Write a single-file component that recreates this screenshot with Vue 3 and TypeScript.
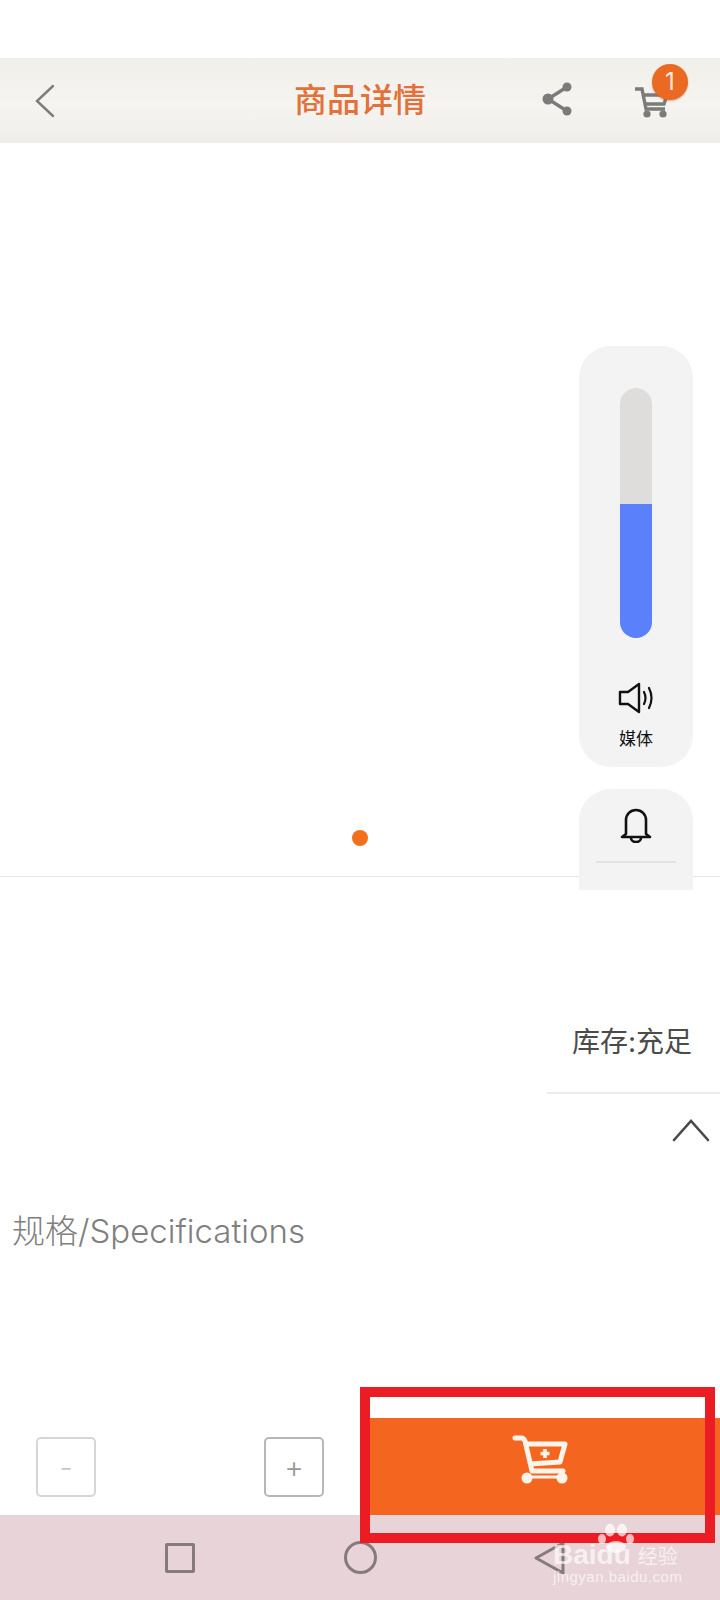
<template>
  <div class="page">
    <header class="top-bar">
      <button class="back-btn" aria-label="back">
        <svg width="22" height="34" viewBox="0 0 22 34" fill="none">
          <path d="M19 2 L3 17 L19 32" stroke="#7d7d7b" stroke-width="2.4" stroke-linecap="round" />
        </svg>
      </button>
      <div class="top-title">商品详情</div>
      <div class="top-actions">
        <svg class="share-icon" width="32" height="36" viewBox="0 0 32 36" fill="none">
          <path d="M26 6 L7 18 L26 30" stroke="#7b7b7b" stroke-width="3.4" />
          <circle cx="26" cy="6" r="4.5" fill="#7b7b7b" />
          <circle cx="7" cy="18" r="5.5" fill="#7b7b7b" />
          <circle cx="26" cy="30" r="4.5" fill="#7b7b7b" />
        </svg>
        <div class="cart-wrap">
          <svg width="36" height="36" viewBox="0 0 36 36" fill="none">
            <path d="M1 5 H8 L12 25 H31" stroke="#7b7b7b" stroke-width="3.4" />
            <path d="M9 11 H33 L30 20 H11" stroke="#7b7b7b" stroke-width="3.4" />
            <circle cx="13" cy="30" r="3.6" fill="#7b7b7b" />
            <circle cx="29" cy="30" r="3.6" fill="#7b7b7b" />
          </svg>
          <span class="cart-badge">1</span>
        </div>
      </div>
    </header>

    <section class="hero">
      <span class="hero-dot"></span>
    </section>

    <section class="stock-section">
      <div class="stock-label">库存:充足</div>
      <div class="fold-row">
        <svg width="38" height="24" viewBox="0 0 38 24" fill="none">
          <path d="M2 22 L19 3 L36 22" stroke="#4a4a4a" stroke-width="2.6" stroke-linecap="round" />
        </svg>
      </div>
      <div class="spec-label">规格/Specifications</div>
    </section>

    <section class="buy-bar">
      <div class="qty">
        <button class="qty-btn minus">-</button>
        <button class="qty-btn plus">+</button>
      </div>
      <button class="add-btn" aria-label="add to cart">
        <svg width="56" height="50" viewBox="0 0 56 50" fill="none">
          <path d="M3 3 H9 Q12 3 13 6 L20 36 H51" stroke="#fff4ea" stroke-width="5" stroke-linecap="round" stroke-linejoin="round" />
          <path d="M13 9 H53 L48 27 L18 29" stroke="#fff4ea" stroke-width="5" stroke-linejoin="round" />
          <path d="M33 14 V23 M28.500 18.500 H37.500" stroke="#fff4ea" stroke-width="3.600" />
          <circle cx="15" cy="43" r="5.500" fill="#fff4ea" />
          <circle cx="50" cy="43" r="5.500" fill="#fff4ea" />
          <path d="M15 42 H50" stroke="#fff4ea" stroke-width="3" />
        </svg>
      </button>
    </section>

    <nav class="sys-nav">
      <span class="sys-square"></span>
      <span class="sys-circle"></span>
      <svg class="sys-back" width="32" height="34" viewBox="0 0 32 34" fill="none">
        <path d="M30 2 L3 17 L30 32 Z" stroke="#857a7e" stroke-width="3" stroke-linejoin="round" />
      </svg>
    </nav>

    <aside class="volume-panel">
      <div class="volume-track">
        <div class="volume-fill" :style="{ height: volume + '%' }"></div>
      </div>
      <svg class="speaker" width="36" height="32" viewBox="0 0 36 32" fill="none">
        <path d="M2 10 H10 L21 2 V30 L10 22 H2 Z" stroke="#111" stroke-width="2.4" stroke-linejoin="round" />
        <path d="M26 10 Q29 16 26 22 M31 6 Q36 16 31 26" stroke="#111" stroke-width="2.2" stroke-linecap="round" />
      </svg>
      <div class="volume-name">媒体</div>
    </aside>

    <aside class="ring-panel">
      <svg width="32" height="36" viewBox="0 0 32 36" fill="none">
        <path d="M6 27 V13 A10 10 0 0 1 26 13 V27 L30 30 H2 Z" stroke="#111" stroke-width="2.6" stroke-linejoin="round" />
        <path d="M11 31 A5 4 0 0 0 21 31" stroke="#111" stroke-width="2.6" />
      </svg>
      <div class="ring-line"></div>
    </aside>

    <div class="mark-box"></div>

    <div class="watermark">
      <svg class="paw" width="38" height="30" viewBox="0 0 38 30">
        <ellipse cx="13" cy="7" rx="5" ry="6.500" />
        <ellipse cx="25" cy="7" rx="5" ry="6.500" />
        <ellipse cx="5" cy="16" rx="4" ry="5" />
        <ellipse cx="33" cy="16" rx="4" ry="5" />
        <ellipse cx="19" cy="24" rx="10" ry="6" />
      </svg>
      <div class="wm-main">Baidu<span class="wm-cn">经验</span></div>
      <div class="wm-url">jingyan.baidu.com</div>
    </div>
  </div>
</template>

<script setup lang="ts">
import { ref } from 'vue'

// share of the slider that is filled
const volume = ref<number>(53.5)
</script>

<style>
html,
body {
  margin: 0;
  background: #fff;
}
</style>

<style scoped>
* {
  box-sizing: border-box;
}

.page {
  position: relative;
  width: 720px;
  height: 1600px;
  overflow: hidden;
  display: flex;
  flex-direction: column;
  padding-top: 58px;
  background: #fff;
  font-family: "Inter", "Noto Sans CJK SC", sans-serif;
}

button {
  padding: 0;
  border: 0;
  background: none;
  font-family: inherit;
}

.top-bar {
  height: 85px;
  display: grid;
  grid-template-columns: 1fr auto 1fr;
  align-items: center;
  padding: 0 34px;
  background: linear-gradient(180deg, #f1efea 0%, #f5f4f0 55%, #efeeea 100%);
}

.back-btn {
  display: flex;
  justify-self: start;
}

.top-title {
  font-size: 33px;
  font-weight: 500;
  color: #e2713a;
  line-height: 1;
}

.top-actions {
  display: flex;
  justify-self: end;
  align-items: center;
  gap: 61px;
  padding-right: 16px;
}

.share-icon {
  margin-top: -3px;
}

.cart-wrap {
  position: relative;
  display: flex;
  margin-top: 3px;
}

.cart-badge {
  position: absolute;
  top: -20px;
  right: -18px;
  width: 36px;
  height: 36px;
  border-radius: 50%;
  background: #ea6a24;
  color: #fbe9dc;
  font-size: 24px;
  line-height: 36px;
  text-align: center;
  box-shadow: 0 1px 2px rgba(150, 80, 30, 0.4);
}

.hero {
  height: 734px;
  display: flex;
  justify-content: center;
  align-items: flex-end;
  padding-bottom: 30px;
  border-bottom: 1px solid #e6e6e6;
}

.hero-dot {
  width: 16px;
  height: 16px;
  border-radius: 50%;
  background: #f2701c;
}

.stock-section {
  flex: 1;
  display: flex;
  flex-direction: column;
}

.stock-label {
  align-self: flex-end;
  width: 173px;
  height: 217px;
  padding: 143px 28px 0 0;
  border-bottom: 2px solid #ececec;
  font-size: 28px;
  line-height: 44px;
  text-align: right;
  color: #4b4b4b;
  white-space: nowrap;
}

.fold-row {
  display: flex;
  justify-content: flex-end;
  padding: 24px 10px 0 0;
}

.spec-label {
  padding: 67px 0 0 12px;
  font-size: 33px;
  line-height: 44px;
  font-weight: 300;
  color: #7f7f7f;
}

.buy-bar {
  height: 97px;
  display: flex;
  background: #fff;
}

.qty {
  width: 360px;
  display: flex;
  justify-content: space-between;
  align-items: center;
  padding: 0 36px;
}

.qty-btn {
  width: 60px;
  height: 60px;
  border: 2px solid #b9b6b6;
  border-radius: 5px;
  font-size: 30px;
  font-weight: 300;
  color: #999;
  line-height: 1;
}

.qty-btn.minus {
  border-color: #d6d6d6;
  color: #c8c8c8;
}

.add-btn {
  flex: 1;
  display: flex;
  align-items: center;
  justify-content: center;
  padding-bottom: 14px;
  background: #f46620;
}

.sys-nav {
  height: 85px;
  display: flex;
  align-items: center;
  padding: 0 155px 0 165px;
  justify-content: space-between;
  background: #e8d3d8;
}

.sys-square {
  width: 30px;
  height: 30px;
  border: 3px solid #857a7e;
  border-radius: 2px;
}

.sys-circle {
  width: 33px;
  height: 33px;
  margin-left: -8px;
  border: 3px solid #857a7e;
  border-radius: 50%;
}

.volume-panel {
  position: absolute;
  top: 346px;
  left: 579px;
  width: 114px;
  height: 421px;
  display: flex;
  flex-direction: column;
  align-items: center;
  padding-top: 42px;
  border-radius: 32px;
  background: #f3f3f3;
}

.volume-track {
  position: relative;
  width: 32px;
  height: 250px;
  border-radius: 16px;
  overflow: hidden;
  background: #dedddc;
}

.volume-fill {
  position: absolute;
  left: 0;
  right: 0;
  bottom: 0;
  background: #5b80fb;
}

.speaker {
  margin-top: 44px;
}

.volume-name {
  margin-top: 13px;
  font-size: 17px;
  line-height: 24px;
  color: #111;
}

.ring-panel {
  position: absolute;
  top: 789px;
  left: 579px;
  width: 114px;
  height: 101px;
  display: flex;
  flex-direction: column;
  align-items: center;
  padding-top: 18px;
  border-radius: 32px 32px 0 0;
  background: #f3f3f3;
}

.ring-line {
  width: 80px;
  height: 2px;
  margin-top: 18px;
  background: #e2e2e2;
}

.mark-box {
  position: absolute;
  top: 1387px;
  left: 360px;
  width: 355px;
  height: 156px;
  border: 10px solid #ec1c24;
}

.watermark {
  position: absolute;
  top: 1523px;
  left: 553px;
  width: 130px;
  height: 64px;
  color: rgba(255, 255, 255, 0.68);
}

.paw {
  position: absolute;
  top: 0;
  left: 44px;
  fill: rgba(255, 255, 255, 0.7);
}

.wm-main {
  position: absolute;
  top: 15px;
  left: 0;
  font-family: "Liberation Sans", "Noto Sans CJK SC", sans-serif;
  font-size: 28px;
  line-height: 34px;
  font-weight: 700;
  white-space: nowrap;
}

.wm-cn {
  margin-left: 7px;
  font-size: 20px;
  font-weight: 400;
}

.wm-url {
  position: absolute;
  top: 45px;
  left: 0;
  font-family: "Liberation Sans", sans-serif;
  font-size: 15px;
  line-height: 18px;
  letter-spacing: 0.5px;
  white-space: nowrap;
}
</style>
